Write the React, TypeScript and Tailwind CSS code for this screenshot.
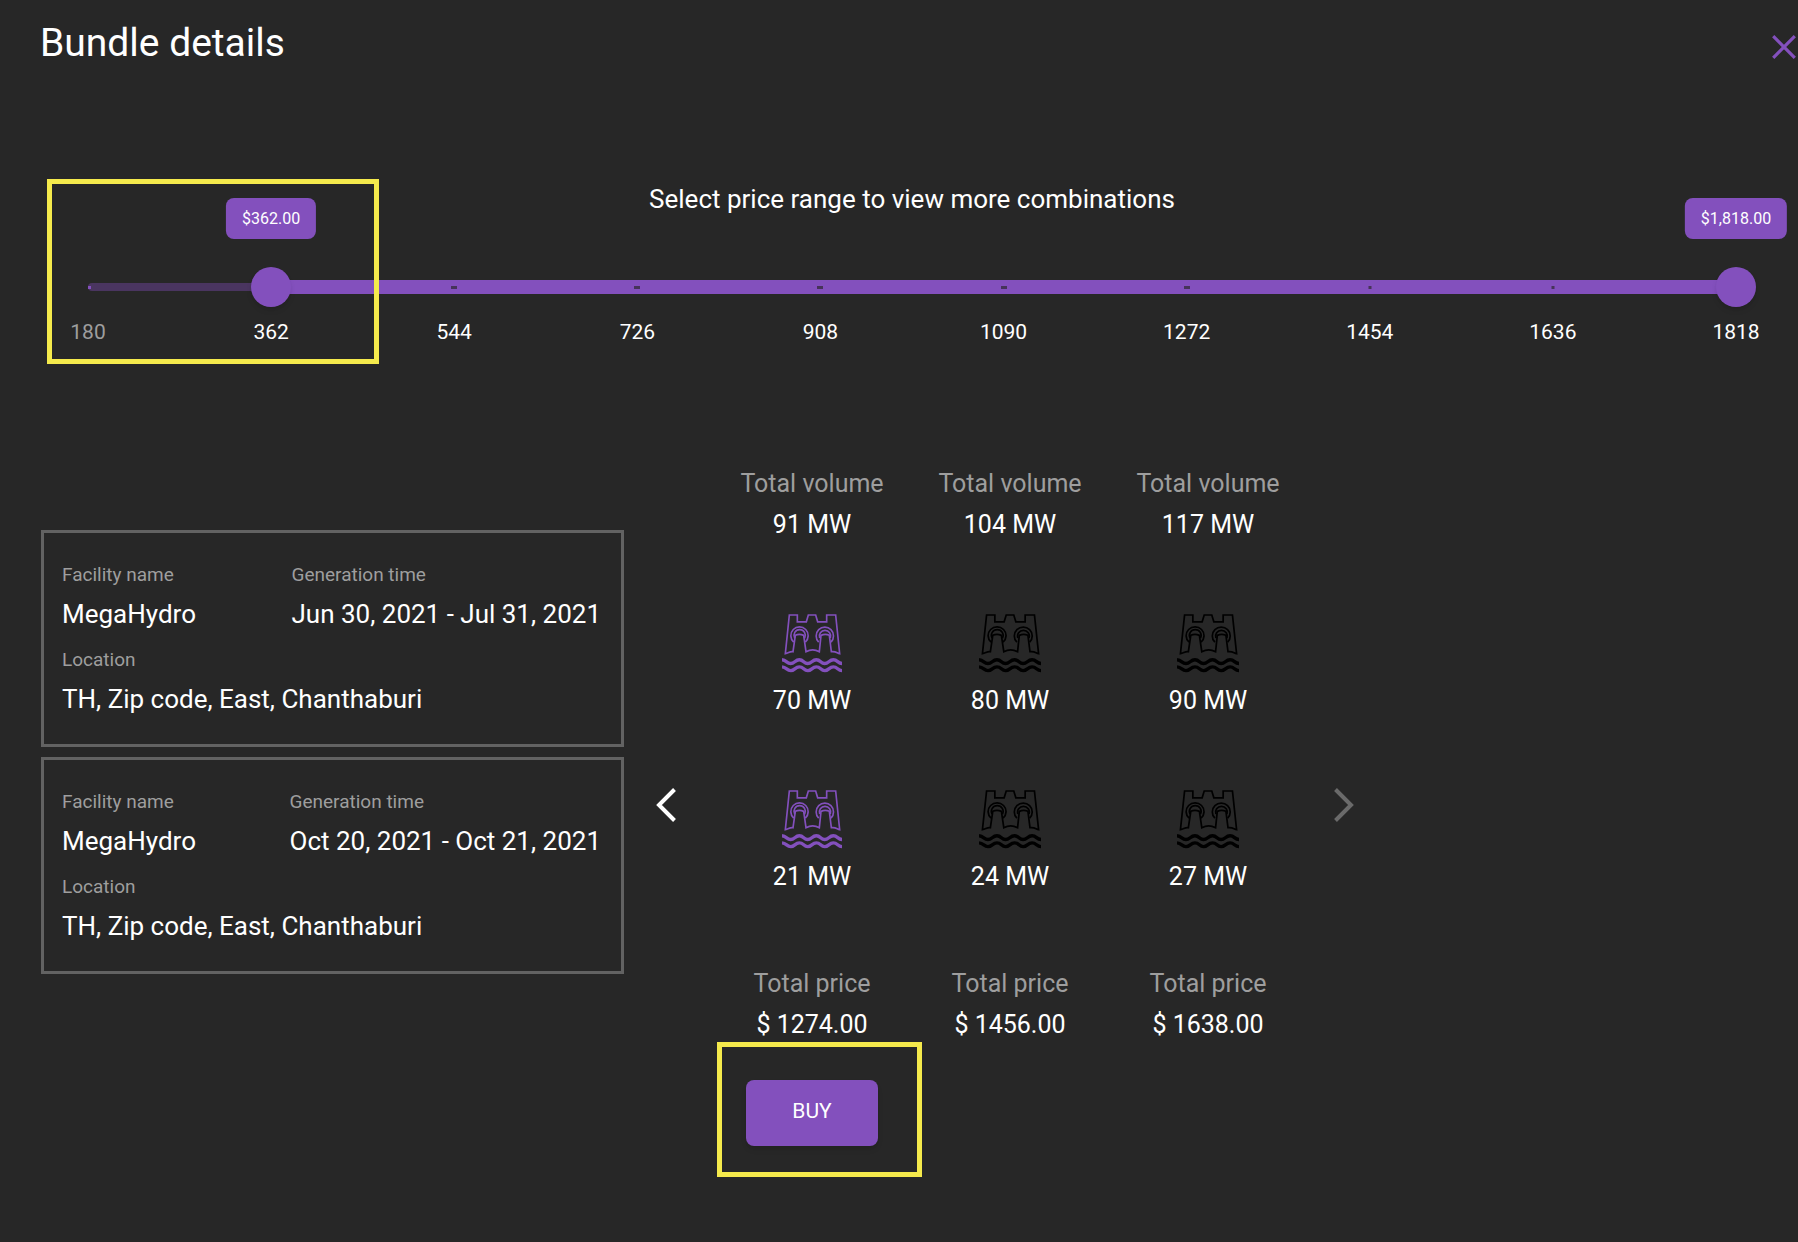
import { useState } from "react";

const MIN = 180;
const MAX = 1818;
const STEP = 182;
const MARKS = [180, 362, 544, 726, 908, 1090, 1272, 1454, 1636, 1818];

const FACILITIES = [
  { name: "MegaHydro", time: "Jun 30, 2021 - Jul 31, 2021", location: "TH, Zip code, East, Chanthaburi" },
  { name: "MegaHydro", time: "Oct 20, 2021 - Oct 21, 2021", location: "TH, Zip code, East, Chanthaburi" },
];

const BUNDLES = [
  { volume: "91 MW", parts: ["70 MW", "21 MW"], price: "$ 1274.00" },
  { volume: "104 MW", parts: ["80 MW", "24 MW"], price: "$ 1456.00" },
  { volume: "117 MW", parts: ["90 MW", "27 MW"], price: "$ 1638.00" },
];

const percent = (value: number) => ((value - MIN) / (MAX - MIN)) * 100;

const money = (value: number) =>
  "$" + value.toLocaleString("en-US", { minimumFractionDigits: 2, maximumFractionDigits: 2 });

function HydroIcon({ active }: { active: boolean }) {
  return (
    <svg
      viewBox="36 41 180 174"
      preserveAspectRatio="none"
      aria-hidden="true"
      className={active ? "h-[59px] w-[60px] text-[#8350bd]" : "h-[59px] w-[62px] text-black"}
      fill="none"
      stroke="currentColor"
      strokeWidth="5"
    >
      <path d="M46 158 58 44H82V64H109L115 44H137L143 64H170V44H197L209 158C201 157 199 150 184 152L178 104Q166 98 153 104L148 152Q128 142 108 152L101 104Q88 98 76 104L69 152C60 150 55 157 46 158Z" />
      <path d="M71 124A26 26 0 1 1 106 124M146 124A26 26 0 1 1 183 124" />
      <path d="M74 112A17 17 0 1 1 104 112M149 112A17 17 0 1 1 181 112" />
      <path
        strokeWidth="10"
        d="M36 176C50 177 50 187 62 187S75 176 88 176 101 187 113 187 126 176 139 176 152 187 164 187 177 176 190 176 203 187 216 187M36 197C50 198 50 208 62 208S75 197 88 197 101 208 113 208 126 197 139 197 152 208 164 208 177 197 190 197 203 208 216 208"
      />
    </svg>
  );
}

const THUMB_INPUT =
  "pointer-events-none absolute inset-y-0 -left-5 m-0 h-10 w-[calc(100%+40px)] cursor-pointer appearance-none bg-transparent outline-none [&::-webkit-slider-thumb]:pointer-events-auto [&::-webkit-slider-thumb]:size-10 [&::-webkit-slider-thumb]:appearance-none [&::-webkit-slider-thumb]:rounded-full [&::-webkit-slider-thumb]:bg-[#8350bd] [&::-webkit-slider-thumb]:shadow-md";

function ValueBubble({ value }: { value: number }) {
  return (
    <output
      className="absolute bottom-full mb-7 flex h-[41px] -translate-x-1/2 items-center rounded-lg bg-[#8350bd] px-4 text-base"
      style={{ left: `${percent(value)}%` }}
    >
      {money(value)}
    </output>
  );
}

function PriceRange() {
  const [low, setLow] = useState(362);
  const [high, setHigh] = useState(1818);

  return (
    <section className="relative mt-[106px] pr-[62px] pl-[88px]">
      <h2 className="text-center text-[26px] leading-10">Select price range to view more combinations</h2>
      <div className="relative mt-12 flex h-10 items-center">
        <div className="h-2 w-full rounded-full bg-[#4a3560]" />
        <div
          className="absolute h-3.5 bg-[#8350bd]"
          style={{ left: `${percent(low)}%`, right: `${100 - percent(high)}%` }}
        />
        {MARKS.map((mark) => (
          <span
            key={mark}
            className={
              mark < low
                ? "absolute h-[3px] w-[3px] bg-[#8350bd]"
                : mark > 1272
                  ? "absolute h-[3px] w-[3px] -translate-x-1/2 bg-[#463359]"
                  : "absolute h-[3px] w-1.5 -translate-x-1/2 bg-[#463359]"
            }
            style={{ left: `${percent(mark)}%` }}
          />
        ))}
        <ValueBubble value={low} />
        <ValueBubble value={high} />
        <input
          type="range"
          aria-label="Minimum price"
          min={MIN}
          max={MAX}
          step={STEP}
          value={low}
          onChange={(e) => setLow(Math.min(Number(e.target.value), high - STEP))}
          className={THUMB_INPUT}
        />
        <input
          type="range"
          aria-label="Maximum price"
          min={MIN}
          max={MAX}
          step={STEP}
          value={high}
          onChange={(e) => setHigh(Math.max(Number(e.target.value), low + STEP))}
          className={THUMB_INPUT}
        />
      </div>
      <ul className="mt-2.5 flex justify-between text-[21px] leading-[30px]">
        {MARKS.map((mark) => (
          <li
            key={mark}
            className={mark < low ? "flex w-0 justify-center text-[#9e9e9e]" : "flex w-0 justify-center"}
          >
            {mark}
          </li>
        ))}
      </ul>
      <div className="pointer-events-none absolute top-0 left-[47px] h-[185px] w-[332px] border-5 border-[#f5ea4c]" />
    </section>
  );
}

function Field({ label, value }: { label: string; value: string }) {
  return (
    <div>
      <dt className="text-[19px] leading-10 text-[#9e9e9e]">{label}</dt>
      <dd className="-mt-1 pb-0.5 text-[26px] leading-[47px] whitespace-nowrap">{value}</dd>
    </div>
  );
}

function FacilityCard({ name, time, location }: (typeof FACILITIES)[number]) {
  return (
    <dl className="h-[217px] border-3 border-[#626262] pt-[22px] pr-5 pl-[18px]">
      <div className="flex justify-between">
        <Field label="Facility name" value={name} />
        <Field label="Generation time" value={time} />
      </div>
      <Field label="Location" value={location} />
    </dl>
  );
}

function Arrow({ direction, disabled }: { direction: "previous" | "next"; disabled?: boolean }) {
  return (
    <button
      type="button"
      aria-label={direction === "previous" ? "Previous bundles" : "Next bundles"}
      disabled={disabled}
      className={disabled ? "text-[#6a6a6a]" : "cursor-pointer text-white"}
    >
      <svg viewBox="0 0 20 34" className="h-[34px] w-5" fill="none" stroke="currentColor" strokeWidth="4">
        <path d={direction === "previous" ? "M18.5 1.5 3 17 18.5 32.5" : "M1.5 1.5 17 17 1.5 32.5"} />
      </svg>
    </button>
  );
}

export default function App() {
  return (
    <main className="min-h-screen bg-[#272727] font-[Roboto,sans-serif] text-white">
      <header className="flex items-start justify-between pt-[13px] pr-0.5 pl-10">
        <h1 className="text-[39px] leading-[60px]">Bundle details</h1>
        <button type="button" aria-label="Close" className="mt-[22px] cursor-pointer text-[#8350bd]">
          <svg viewBox="0 0 24 24" className="size-6" fill="none" stroke="currentColor" strokeWidth="3.2">
            <path d="M1.2 1.2 22.8 22.8M22.8 1.2 1.2 22.8" />
          </svg>
        </button>
      </header>

      <PriceRange />

      <div className="mt-[116px] flex items-center pl-[41px]">
        <div className="mt-[67px] flex w-[583px] shrink-0 flex-col gap-2.5 self-start">
          {FACILITIES.map((facility) => (
            <FacilityCard key={facility.time} {...facility} />
          ))}
        </div>
        <div className="ml-8 flex items-center">
          <Arrow direction="previous" />
          <div className="mr-[27px] ml-[37px] flex items-start">
            {BUNDLES.map((bundle, index) => (
              <article
                key={bundle.volume}
                className="flex w-[198px] flex-col items-center text-[25px] leading-[41px]"
              >
                <p className="text-[#9e9e9e]">Total volume</p>
                <p>{bundle.volume}</p>
                {bundle.parts.map((part) => (
                  <div key={part} className="mt-[69px] flex flex-col items-center gap-[7px]">
                    <HydroIcon active={index === 0} />
                    <p>{part}</p>
                  </div>
                ))}
                <p className="mt-[66px] text-[#9e9e9e]">Total price</p>
                <p>{bundle.price}</p>
                {index === 0 && (
                  <div className="relative mt-[35px]">
                    <button
                      type="button"
                      className="h-[66px] w-[132px] cursor-pointer rounded-lg bg-[#8350bd] pb-1 text-[21px] shadow-md"
                    >
                      BUY
                    </button>
                    <div className="pointer-events-none absolute -top-[38px] -right-11 -bottom-[31px] -left-[29px] border-5 border-[#f5ea4c]" />
                  </div>
                )}
              </article>
            ))}
          </div>
          <Arrow direction="next" disabled />
        </div>
      </div>
    </main>
  );
}
